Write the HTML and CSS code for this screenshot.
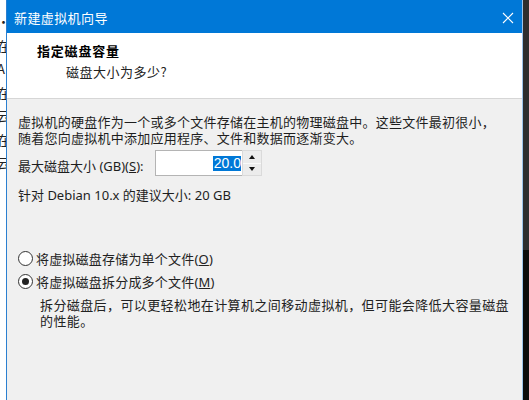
FILE: index.html
```html
<!DOCTYPE html>
<html lang="zh-CN">
<head>
  <meta charset="UTF-8" />
  <title>新建虚拟机向导</title>
  <link rel="stylesheet" href="styles.css">
</head>
<body>

  <div class="desktop">
    <div class="behind">
      <div class="behind-line">·</div>
      <div class="behind-line">在</div>
      <div class="behind-line">A</div>
      <div class="behind-line">在</div>
      <div class="behind-line">云</div>
      <div class="behind-line">在</div>
      <div class="behind-line">云</div>
    </div>
    <div class="side-dark"></div>

    <div class="dialog">
      <div class="titlebar">
        <span class="title">新建虚拟机向导</span>
        <svg class="close" width="12" height="12" viewBox="0 0 12 12">
          <path d="M1 1 L11 11 M11 1 L1 11" stroke="#fff" stroke-width="1.1" fill="none"/>
        </svg>
      </div>

      <div class="header">
        <div class="heading">指定磁盘容量</div>
        <div class="subheading">磁盘大小为多少?</div>
      </div>

      <div class="body">
        <p class="intro">虚拟机的硬盘作为一个或多个文件存储在主机的物理磁盘中。这些文件最初很小，<br>随着您向虚拟机中添加应用程序、文件和数据而逐渐变大。</p>

        <div class="size-row">
          <label class="size-label">最大磁盘大小 (GB)(<u>S</u>):</label>
          <div class="spin">
            <div class="spin-field"><span class="selected">20.0</span></div>
            <div class="spin-buttons">
              <div class="spin-btn"><span class="arrow up"></span></div>
              <div class="spin-btn"><span class="arrow down"></span></div>
            </div>
          </div>
        </div>

        <div class="hint">针对 Debian 10.x 的建议大小: 20 GB</div>

        <div class="radio-row first">
          <span class="radio"></span>
          <span class="radio-text">将虚拟磁盘存储为单个文件(<u>O</u>)</span>
        </div>
        <div class="radio-row">
          <span class="radio checked"></span>
          <span class="radio-text">将虚拟磁盘拆分成多个文件(<u>M</u>)</span>
        </div>
        <p class="desc">拆分磁盘后，可以更轻松地在计算机之间移动虚拟机，但可能会降低大容量磁盘<br>的性能。</p>
      </div>
    </div>
  </div>

</body>
</html>
```

FILE: styles.css
```css
body {
  margin: 0;
  padding: 0;
  font-family: "Noto Sans", "Noto Sans CJK SC", sans-serif;
  color: #1e1e1e;
  overflow: hidden;
}

.desktop {
  position: relative;
  width: 529px;
  height: 400px;
  background: #fff;
  overflow: hidden;
}

/* text of the window underneath, mostly hidden */
.behind {
  padding-top: 10px;
}

.behind-line {
  font-family: "Noto Sans CJK SC", sans-serif;
  font-size: 13px;
  line-height: 23.5px;
  margin-left: -3px;
  color: #222;
}

.side-dark {
  position: absolute;
  right: 0;
  top: 0;
  width: 7px;
  height: 400px;
  background: linear-gradient(#2e2e2e 0, #2e2e2e 250px, #0c0c0c 250px);
}

.dialog {
  position: absolute;
  left: 6px;
  top: 0;
  width: 515px;
  height: 400px;
  border-left: 1px solid #2b7fd0;
  border-right: 1px solid #9cc4ea;
  background: #f0f0f0;
}

.titlebar {
  height: 33px;
  background: #0078d7;
  display: flex;
  align-items: center;
  justify-content: space-between;
  padding: 0 8px 0 7px;
}

.title {
  color: #fff;
  font-family: "Noto Sans CJK SC", sans-serif;
  font-size: 13px;
  letter-spacing: 0.4px;
  line-height: 16px;
  margin-top: 2px;
}

.close {
  margin-top: 2px;
}

.header {
  height: 66px;
  background: #fff;
  border-bottom: 1px solid #d6d6d6;
  padding-top: 10px;
  box-sizing: border-box;
  font-family: "Noto Sans CJK SC", sans-serif;
  font-size: 13px;
}

.heading {
  font-weight: bold;
  color: #000;
  line-height: 16px;
  padding-left: 30px;
  letter-spacing: 0.8px;
}

.subheading {
  line-height: 16px;
  margin-top: 5px;
  padding-left: 59px;
  color: #222;
  letter-spacing: 0.5px;
}

.body {
  padding: 15px 0 0 11px;
  font-size: 13px;
}

.intro {
  margin: 0;
  line-height: 16px;
  letter-spacing: 0.25px;
  font-family: "Noto Sans CJK SC", sans-serif;
}

.size-row {
  display: flex;
  align-items: center;
  height: 26px;
  margin-top: 4px;
}

.size-label {
  width: 137px;
  padding-top: 4px;
}

.spin {
  display: flex;
  height: 26px;
}

.spin-field {
  width: 85px;
  height: 24px;
  background: #fff;
  border: 1px solid #b4b4b4;
  border-right: none;
  display: flex;
  align-items: center;
  justify-content: flex-end;
  padding-right: 1px;
}

.selected {
  background: #0078d7;
  color: #fff;
  font-family: "Liberation Sans", sans-serif;
  font-size: 14px;
  line-height: 15px;
  padding: 0 0 0 1px;
}

.spin-buttons {
  width: 18px;
  display: flex;
  flex-direction: column;
  border: 1px solid #dadada;
  background: #f4f4f4;
}

.spin-btn {
  flex: 1;
  display: flex;
  align-items: center;
  justify-content: center;
  background: #ececec;
}

.spin-btn + .spin-btn {
  border-top: 1px solid #fafafa;
}

.arrow {
  width: 0;
  height: 0;
  border-left: 3px solid transparent;
  border-right: 3px solid transparent;
}

.arrow.up {
  border-bottom: 4px solid #111;
}

.arrow.down {
  border-top: 4px solid #111;
}

.hint {
  margin-top: 11px;
  line-height: 16px;
}

.radio-row {
  display: flex;
  align-items: center;
  height: 20px;
  margin-top: 3px;
}

.radio-row.first {
  margin-top: 45px;
}

.radio {
  width: 13px;
  height: 13px;
  border: 1px solid #333;
  border-radius: 50%;
  background: #fff;
  margin-right: 3px;
  display: flex;
  align-items: center;
  justify-content: center;
}

.radio.checked::after {
  content: "";
  width: 7px;
  height: 7px;
  border-radius: 50%;
  background: #222;
}

.radio-text {
  font-family: "Noto Sans", "Noto Sans CJK SC", sans-serif;
  letter-spacing: 0.2px;
  color: #222;
}

.desc {
  margin: 6px 0 0 22px;
  line-height: 16px;
  letter-spacing: 0.4px;
  white-space: nowrap;
  font-family: "Noto Sans CJK SC", sans-serif;
  color: #222;
}
```
